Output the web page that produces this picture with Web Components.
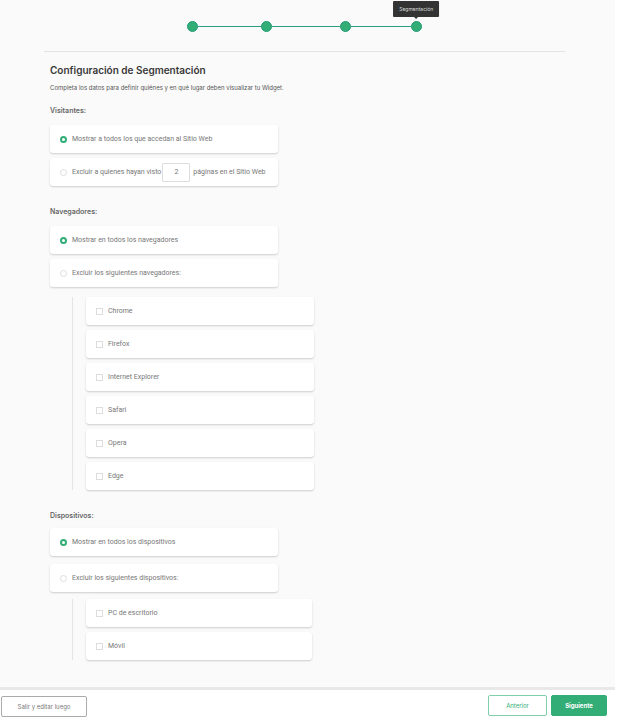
<!DOCTYPE html>
<html lang="es">
<head>
<meta charset="utf-8">
<meta name="viewport" content="width=device-width, initial-scale=1">
<title>Configuración de Segmentación</title>
<style>
  :root {
    --green: #33ad76;
    --page: #fafafa;
    --text: #777;
    --dark: #383838;
    --line: #e4e4e4;
  }
  * { box-sizing: border-box; }
  body { margin: 0; background: #fff; font-family: Inter, "Liberation Sans", sans-serif; font-size: 6px; line-height: 10px; color: var(--text); }
</style>
</head>
<body>
<wizard-page>
  <step-progress slot="progress" label="Segmentación"></step-progress>
  <page-heading slot="heading">
    Configuración de Segmentación
    <span slot="description">Completa los datos para definir quiénes y en qué lugar deben visualizar tu Widget.</span>
  </page-heading>

  <option-group heading="Visitantes:">
    <option-card>
      <input type="radio" name="visitors" id="v-all" checked>
      <label for="v-all">Mostrar a todos los que accedan al Sitio Web</label>
    </option-card>
    <option-card>
      <input type="radio" name="visitors" id="v-some">
      <label for="v-some">Excluir a quienes hayan visto</label>
      <input type="text" inputmode="numeric" value="2" aria-label="Páginas vistas">
      <span>páginas en el Sitio Web</span>
    </option-card>
  </option-group>

  <option-group heading="Navegadores:">
    <option-card>
      <input type="radio" name="browsers" id="b-all" checked>
      <label for="b-all">Mostrar en todos los navegadores</label>
    </option-card>
    <option-card>
      <input type="radio" name="browsers" id="b-some">
      <label for="b-some">Excluir los siguientes navegadores:</label>
    </option-card>
    <option-card slot="nested"><input type="checkbox" id="chrome"><label for="chrome">Chrome</label></option-card>
    <option-card slot="nested"><input type="checkbox" id="firefox"><label for="firefox">Firefox</label></option-card>
    <option-card slot="nested"><input type="checkbox" id="ie"><label for="ie">Internet Explorer</label></option-card>
    <option-card slot="nested"><input type="checkbox" id="safari"><label for="safari">Safari</label></option-card>
    <option-card slot="nested"><input type="checkbox" id="opera"><label for="opera">Opera</label></option-card>
    <option-card slot="nested"><input type="checkbox" id="edge"><label for="edge">Edge</label></option-card>
  </option-group>

  <option-group heading="Dispositivos:" class="devices">
    <option-card>
      <input type="radio" name="devices" id="d-all" checked>
      <label for="d-all">Mostrar en todos los dispositivos</label>
    </option-card>
    <option-card>
      <input type="radio" name="devices" id="d-some">
      <label for="d-some">Excluir los siguientes dispositivos:</label>
    </option-card>
    <option-card slot="nested"><input type="checkbox" id="pc"><label for="pc">PC de escritorio</label></option-card>
    <option-card slot="nested"><input type="checkbox" id="mobile"><label for="mobile">Móvil</label></option-card>
  </option-group>

  <action-button slot="exit" variant="neutral">Salir y editar luego</action-button>
  <action-button slot="actions" variant="outline">Anterior</action-button>
  <action-button slot="actions" variant="solid">Siguiente</action-button>
</wizard-page>

<script>
  const define = (name, html, setup) => {
    const template = document.createElement('template');
    template.innerHTML = '<style>*{box-sizing:border-box}</style>' + html;
    customElements.define(name, class extends HTMLElement {
      constructor() {
        super();
        this.attachShadow({ mode: 'open' }).append(template.content.cloneNode(true));
      }
      connectedCallback() { if (setup) setup(this, this.shadowRoot); }
    });
  };

  define('wizard-page', `
    <style>
      :host { display: flex; flex-direction: column; min-height: 100vh; }
      main { flex: 1; margin-right: 2px; padding: 0 50px 26px 50px; background: var(--page); }
      header { margin: 0 0 11px -6px; padding: 21px 0 19px; border-bottom: 1px solid var(--line); display: flex; justify-content: center; }
      .groups { display: flex; flex-direction: column; gap: 21px; }
      footer { display: flex; align-items: flex-start; justify-content: space-between; margin-right: 2px; padding: 5px 8px 8px 1px; min-height: 38px; border-top: 3px solid #e8e8e8; background: #fff; }
      .actions { display: flex; gap: 4px; }
    </style>
    <main>
      <header><slot name="progress"></slot></header>
      <slot name="heading"></slot>
      <div class="groups"><slot></slot></div>
    </main>
    <footer>
      <slot name="exit"></slot>
      <div class="actions"><slot name="actions"></slot></div>
    </footer>`);

  define('step-progress', `
    <style>
      :host { display: block; width: 45%; }
      ol { display: grid; grid-template-columns: 63fr 68fr 61fr auto; column-gap: 0; margin: 0; padding: 0; list-style: none; }
      li { display: flex; align-items: center; position: relative; }
      .dot { flex: none; width: 11px; height: 11px; border: 1px solid #1f9a73; border-radius: 50%; background: var(--green); }
      li:not(:last-child)::after { content: ""; flex: 1; height: 1px; background: #2b9f80; }
      .tip { position: absolute; bottom: 15px; left: 50%; transform: translateX(-50%); padding: 3px 6px; border-radius: 1px; background: #333; color: #ddd; font-size: 5px; line-height: 10px; white-space: nowrap; }
      .tip::after { content: ""; position: absolute; top: 100%; left: 50%; margin-left: -2px; border: 2px solid transparent; border-top-color: #333; }
    </style>
    <ol>
      <li><span class="dot"></span></li>
      <li><span class="dot"></span></li>
      <li><span class="dot"></span></li>
      <li aria-current="step"><span class="dot"></span><span class="tip"></span></li>
    </ol>`,
    (el, root) => { root.querySelector('.tip').textContent = el.getAttribute('label'); });

  define('page-heading', `
    <style>
      :host { display: block; margin-bottom: 13px; }
      h1 { margin: 0 0 6px; font-size: 10px; line-height: 14px; font-weight: 600; color: var(--dark); }
      p { margin: 0; color: #555; }
    </style>
    <h1><slot></slot></h1>
    <p><slot name="description"></slot></p>`);

  define('option-group', `
    <style>
      :host { display: block; }
      h2 { margin: 0 0 9px; font-size: 7px; line-height: 10px; font-weight: 600; color: #666; }
      .main, .nested { display: flex; flex-direction: column; gap: 5px; max-width: 228px; }
      .nested { box-sizing: content-box; margin: 10px 0 0 22px; padding-left: 13px; border-left: 1px solid var(--line); }
      .nested[hidden] { display: none; }
      :host(.devices) h2 { margin-bottom: 7px; }
      :host(.devices) .main { gap: 8px; }
      :host(.devices) .nested { margin-top: 7px; max-width: 226px; }
    </style>
    <h2></h2>
    <div class="main"><slot></slot></div>
    <div class="nested"><slot name="nested"></slot></div>`,
    (el, root) => {
      root.querySelector('h2').textContent = el.getAttribute('heading');
      root.querySelector('.nested').hidden = !el.querySelector('[slot="nested"]');
    });

  define('option-card', `
    <style>
      :host { box-sizing: border-box; display: flex; align-items: center; min-height: 28px; padding: 0 10px; border-radius: 3px; background: #fff; box-shadow: 0 1px 2px rgba(0,0,0,.18); font-family: Roboto, "Liberation Sans", sans-serif; font-size: 7px; }
      ::slotted(input) { appearance: none; flex: none; box-sizing: border-box; margin: 0; background: #fff; border: 1px solid #ddd; }
      ::slotted(input[type="radio"]) { width: 7px; height: 7px; margin-right: 5px; border-radius: 50%; }
      ::slotted(input[type="radio"]:checked) { border: 2px solid var(--green); }
      ::slotted(input[type="checkbox"]) { width: 7px; height: 7px; margin-right: 5px; }
      ::slotted(input[type="checkbox"]:checked) { background: var(--green); }
      ::slotted(input[type="text"]) { width: 28px; height: 19px; margin: 0 3px 0 1px; padding: 0; border-radius: 1px; font: inherit; color: inherit; text-align: center; }
    </style>
    <slot></slot>`);

  define('action-button', `
    <style>
      :host { display: block; }
      button { display: block; height: 21px; padding: 0 10px; border: 1px solid #aaa; border-radius: 2px; background: #fff; color: #777; font: inherit; line-height: 10px; }
      :host([variant="neutral"]) button { margin-top: 1px; min-width: 86px; }
      :host([variant="outline"]) button { min-width: 59px; border-color: #7fcfa9; color: var(--green); }
      :host([variant="solid"]) button { min-width: 56px; border-color: var(--green); background: var(--green); color: #fff; font-weight: 700; }
    </style>
    <button type="button"><slot></slot></button>`);
</script>
</body>
</html>
